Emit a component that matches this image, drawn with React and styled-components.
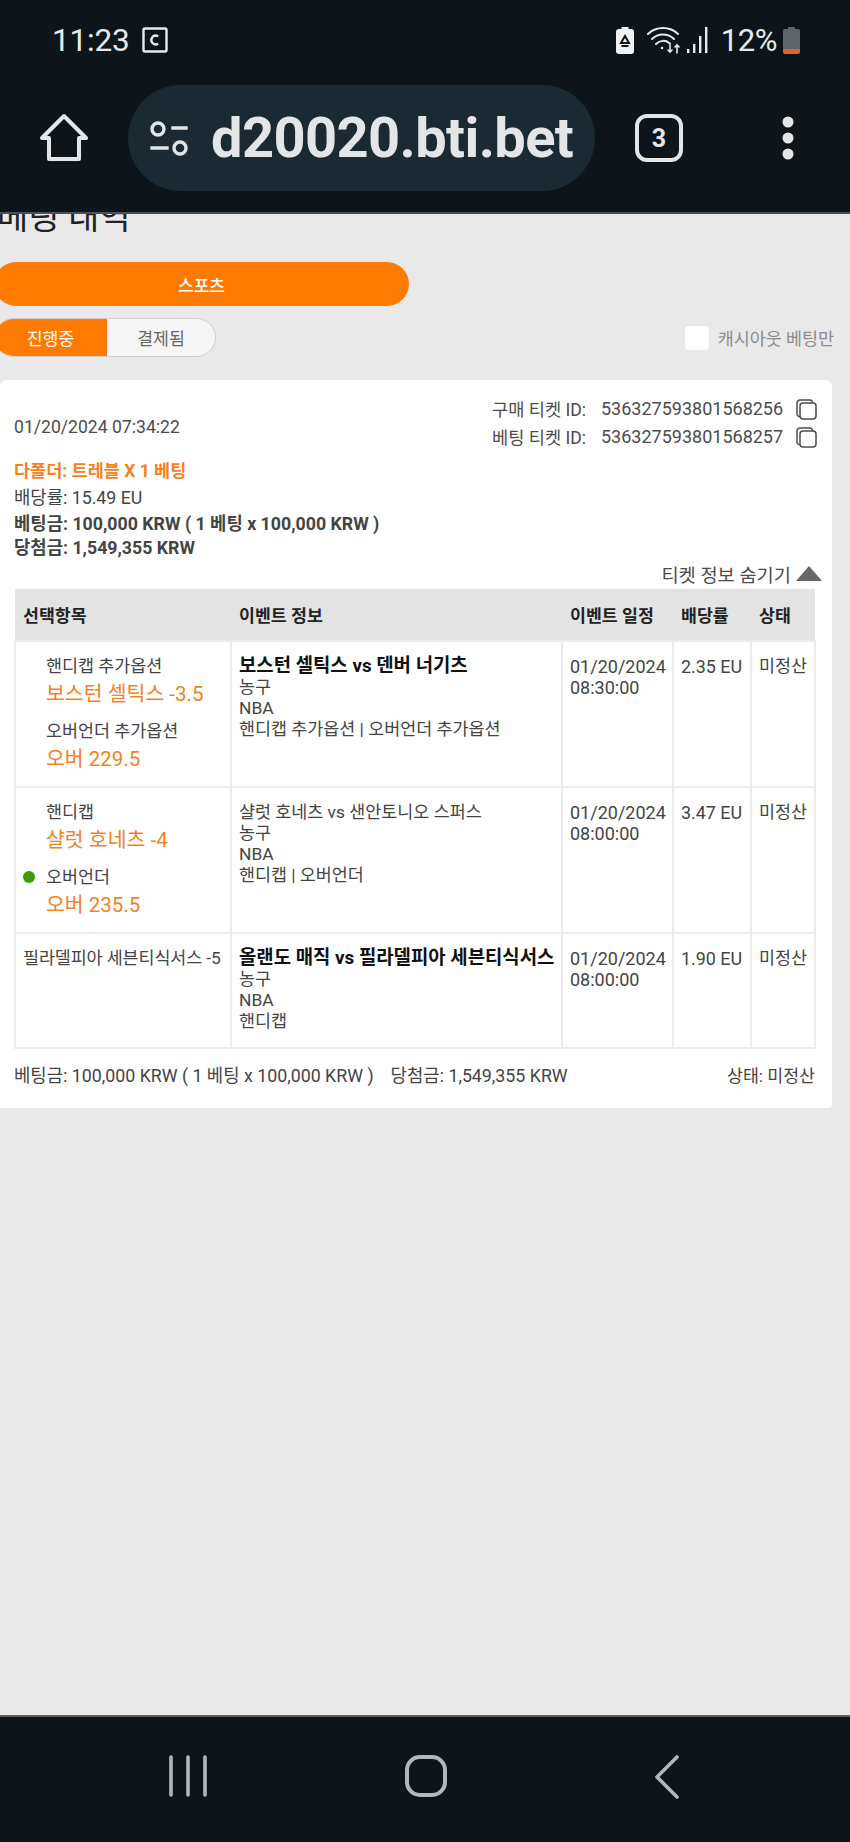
import React from "react";
import styled, { createGlobalStyle } from "styled-components";

const Global = createGlobalStyle`
  html, body { margin: 0; padding: 0; background: #e9e9e9; }
  * { box-sizing: border-box; }
`;
const FONT = `Roboto, "Noto Sans CJK KR", sans-serif`;

const Phone = styled.div`
  width: 850px; height: 1842px; display: flex; flex-direction: column; overflow: hidden;
  font-family: ${FONT}; background: #e9e9e9; color: #444;
`;
const TopChrome = styled.header`
  height: 214px; flex: none; background: #0d151b; border-bottom: 2px solid #4a5055;
  display: flex; flex-direction: column;
`;
const StatusBar = styled.div`
  height: 85px; padding: 24px 50px 0 52px; display: flex; align-items: flex-start; justify-content: space-between; color: #e8eaeb;
`;
const StatusGroup = styled.div`
  display: flex; align-items: center; height: 32px;
`;
const Clock = styled.span`
  font-size: 31.5px; font-weight: 400; width: 82px; letter-spacing: -0.2px;
`;
const Percent = styled.span`
  font-size: 31px; margin: 0 6px 0 12px; letter-spacing: -0.4px;
`;
const UrlRow = styled.div`
  display: flex; align-items: center; height: 106px;
`;
const HomeSlot = styled.div`
  width: 128px; padding-left: 40px; display: flex;
`;
const UrlPill = styled.div`
  width: 467px; height: 106px; border-radius: 53px; background: #1b2933; display: flex; align-items: center; padding-left: 21px; gap: 22px;
`;
const UrlText = styled.span`
  font-size: 56px; font-weight: 700; color: #e3e5e7; letter-spacing: -0.6px; line-height: 1;
`;
const TabSlot = styled.div`
  margin-left: 40px; width: 48px; height: 48px; border: 4px solid #e3e5e7; border-radius: 12px; color: #e3e5e7;
  display: flex; align-items: center; justify-content: center; font-size: 25px; font-weight: 700;
`;
const MenuSlot = styled.div`
  margin-left: 99px; display: flex;
`;
const Main = styled.main`
  flex: 1; min-height: 0; overflow: hidden; display: flex; flex-direction: column;
`;
const Heading = styled.h1`
  margin: -16px 0 0 -3px; font-size: 34px; line-height: 38px; font-weight: 400; color: #222; height: 38px;
`;
const SportButton = styled.div`
  margin: 26px 0 0 -6px; width: 415px; height: 44px; border-radius: 22px; background: #ff7a00; color: #fff;
  display: flex; align-items: center; justify-content: center; font-size: 17px; font-weight: 500;
`;
const FilterRow = styled.div`
  margin-top: 12px; display: flex; align-items: center; justify-content: space-between; padding-right: 16px;
`;
const Tabs = styled.div`
  margin-left: -6px; width: 222px; height: 39px; display: flex; border-radius: 20px; overflow: hidden; border: 1px solid #cfcfcf; background: #f6f6f6;
`;
const Tab = styled.div`
  width: ${p => (p.$on ? 113 : 108)}px; margin: ${p => (p.$on ? "-1px 0 -1px -1px" : "0")}; display: flex; align-items: center; justify-content: center; font-size: 17.3px;
  background: ${p => (p.$on ? "#ff7a00" : "transparent")}; color: ${p => (p.$on ? "#fff" : "#666")};
`;
const CashOut = styled.label`
  display: flex; align-items: center; gap: 9px; font-size: 17.4px; color: #8d8d8d;
`;
const CheckBox = styled.span`
  width: 24px; height: 24px; background: #fff; border-radius: 4px;
`;
const Card = styled.section`
  margin-top: 23px; width: 832px; height: 728px; background: #fff; border-radius: 6px 6px 4px 0; padding: 14px 17px 0 14px; display: flex; flex-direction: column;
`;
const CardTop = styled.div`
  display: flex; justify-content: space-between; height: 62px;
`;
const DateStamp = styled.div`
  font-size: 17.6px; line-height: 20px; margin-top: 23px; color: #4c4c4c;
`;
const Ids = styled.div`
  display: grid; grid-template-columns: 109px auto 34px; grid-auto-rows: 28px; font-size: 17.6px; color: #4c4c4c; align-items: center; width: 323px;
`;
const IdNumber = styled.span`
  font-size: 18px;
`;
const CopyIcon = styled.span`
  display: flex; justify-content: flex-end; padding-top: 3px;
`;
const Summary = styled.div`
  margin-top: 3px; display: flex; flex-direction: column; font-size: 17.75px; line-height: 25px;
`;
const SumLine = styled.div`
  color: ${p => p.$c || "#444"}; font-weight: ${p => (p.$b ? 700 : 400)}; height: ${p => p.$h || 25}px;
  font-size: ${p => (p.$c ? "17.5px" : "inherit")};
`;
const HideRow = styled.div`
  height: 29px; padding-bottom: 3px; display: flex; align-items: center; justify-content: flex-end; gap: 5px; font-size: 18.7px; color: #4c4c4c; margin-right: -7px;
`;
const Table = styled.table`
  width: 800px; border-collapse: collapse; table-layout: fixed; font-size: 17.4px;
`;
const Th = styled.th`
  background: #e3e3e3; height: 52px; text-align: left; padding: 0 8px; font-size: 17.3px; font-weight: 700; color: #222;
  width: ${p => p.$w}px;
`;
const Td = styled.td`
  border: 2px solid #ececec; vertical-align: top; padding: 14px 7px 0; line-height: 21px; color: #444;
`;
const PickTd = styled(Td)`
  padding: 0 0 0 7px; color: #444;
`;
const Pick = styled.div`
  position: relative; padding-left: 23px; display: flex; flex-direction: column;
`;
const PickStack = styled.div`
  padding-top: 12px; display: flex; flex-direction: column; height: 144px;
`;
const PickLabel = styled.div`
  font-size: 17.4px; line-height: 24px; height: 24px; margin-top: ${p => (p.$gap ? 11 : 0)}px;
`;
const PickValue = styled.div`
  font-size: 20.5px; line-height: 28px; margin-top: 2px; color: #f5821f; height: 28px;
`;
const Dot = styled.i`
  position: absolute; left: 0; top: 71px; width: 12px; height: 12px; border-radius: 50%; background: #3a9e0c;
`;
const FlatPick = styled.div`
  padding-top: 14px; font-size: 17.4px; line-height: 21px; white-space: nowrap; letter-spacing: -0.1px;
`;
const Title = styled.div`
  font-weight: ${p => (p.$b ? 700 : 400)}; color: ${p => (p.$b ? "#111" : "#444")}; font-size: ${p => (p.$b ? 18.85 : 17.4)}px; white-space: nowrap;
`;
const Nowrap = styled.div`
  white-space: nowrap; font-size: ${p => p.$s || 17.4}px;
`;
const Footer = styled.div`
  margin-top: 16px; width: 801px; display: flex; align-items: baseline; font-size: 17.8px; line-height: 22px; color: #444;
`;
const FootWin = styled.span`
  margin-left: 17px; flex: 1;
`;
const FootState = styled.span`
  font-size: 17.3px;
`;
const BottomNav = styled.nav`
  height: 127px; flex: none; background: #0d151b; border-top: 2px solid #5a5f63; display: flex; align-items: flex-start; padding-top: 38px;
`;
const NavSlot = styled.div`
  margin-left: ${p => p.$ml}px; display: flex;
`;
const StatusGap = styled.span`
  width: 13px;
`;

const Home = () => (
  <svg width="48" height="50" viewBox="0 0 48 50" fill="none" stroke="#e3e5e7" strokeWidth="4" strokeLinejoin="round">
    <path d="M24 3 L46 25 H39 V46 H9 V25 H2 Z" />
  </svg>
);
const Tune = () => (
  <svg width="40" height="40" viewBox="0 0 40 40" fill="none" stroke="#e3e5e7" strokeWidth="3.4" strokeLinecap="square">
    <circle cx="9" cy="11" r="6" />
    <path d="M24 10 H37 M3 30 H18" />
    <circle cx="31" cy="30" r="6" />
  </svg>
);
const Dots = () => (
  <svg width="12" height="44" viewBox="0 0 12 44" fill="#e3e5e7">
    <circle cx="6" cy="6" r="5.5" /><circle cx="6" cy="22" r="5.5" /><circle cx="6" cy="38" r="5.5" />
  </svg>
);
const CBox = () => (
  <svg width="26" height="26" viewBox="0 0 26 26" style={{ marginLeft: 8 }}>
    <rect x="1.5" y="1.5" width="23" height="23" rx="1.5" fill="none" stroke="#e8eaeb" strokeWidth="2.4" />
    <path d="M16 9.5 a4 4.5 0 1 0 0 7" fill="none" stroke="#e8eaeb" strokeWidth="2.4" />
  </svg>
);
const RecycleBattery = () => (
  <svg width="18" height="27" viewBox="0 0 18 27">
    <rect x="5.5" y="0" width="7" height="3" fill="#f2f2f2" />
    <rect x="0" y="2" width="18" height="25" rx="3" fill="#f2f2f2" />
    <path d="M9 9 L13 16 H5 Z M5.5 19 H12.5" fill="none" stroke="#0d151b" strokeWidth="2" />
  </svg>
);
const Wifi = () => (
  <svg width="34" height="28" viewBox="0 0 34 28" fill="none" stroke="#e8eaeb" strokeWidth="2" strokeLinecap="round">
    <path d="M1 8 C9 0 23 0 31 8" />
    <path d="M5 13 C11 7 21 7 27 13" />
    <path d="M9 18 C13 14 19 14 22 17" />
    <circle cx="15" cy="22" r="1.3" fill="#e8eaeb" stroke="none" />
    <path d="M23 17 V26 M21 24 L23 26 L25 24 M30 27 V19 M28 21 L30 19 L32 21" strokeWidth="1.6" />
  </svg>
);
const Signal = () => (
  <svg width="22" height="26" viewBox="0 0 22 26" fill="#e8eaeb" style={{ marginLeft: 6 }}>
    <rect x="0" y="22" width="2.4" height="4" />
    <rect x="6" y="17" width="2.4" height="9" />
    <rect x="12" y="9" width="2.4" height="17" />
    <rect x="18" y="0" width="2.4" height="26" />
  </svg>
);
const Battery = () => (
  <svg width="17" height="27" viewBox="0 0 17 27">
    <rect x="5" y="0" width="7" height="3" fill="#60656a" />
    <rect x="0" y="2" width="17" height="21" rx="2" fill="#60656a" />
    <path d="M0 22 H17 V25 a2 2 0 0 1 -2 2 H2 a2 2 0 0 1 -2 -2 Z" fill="#e2622e" />
  </svg>
);
const Copy = () => (
  <svg width="21" height="21" viewBox="0 0 21 21" fill="none" stroke="#4c4c4c" strokeWidth="1.5">
    <path d="M4 17.5 A2.5 2.5 0 0 1 1 15 V4 A3 3 0 0 1 4 1 H14 A2.5 2.5 0 0 1 16.5 3.5" />
    <rect x="4" y="4" width="16" height="16" rx="3" fill="#fff" />
  </svg>
);
const Triangle = () => (
  <svg width="26" height="15" viewBox="0 0 26 15"><path d="M13 0 L26 15 H0 Z" fill="#666" /></svg>
);
const NavBars = () => (
  <svg width="40" height="42" viewBox="0 0 40 42" stroke="#b4b7ba" strokeWidth="3.6" strokeLinecap="round">
    <path d="M3 2 V40 M20 2 V40 M37 2 V40" />
  </svg>
);
const NavHome = () => (
  <svg width="42" height="42" viewBox="0 0 42 42" fill="none" stroke="#b4b7ba" strokeWidth="4">
    <rect x="2" y="2" width="38" height="38" rx="13" />
  </svg>
);
const NavBack = () => (
  <svg width="24" height="44" viewBox="0 0 24 44" fill="none" stroke="#b4b7ba" strokeWidth="3.6" strokeLinecap="round" strokeLinejoin="round">
    <path d="M22 2 L2 22 L22 42" />
  </svg>
);

export default function App() {
  return (
    <Phone>
      <Global />
      <TopChrome>
        <StatusBar>
          <StatusGroup><Clock>11:23</Clock><CBox /></StatusGroup>
          <StatusGroup>
            <RecycleBattery /><StatusGap /><Wifi /><Signal /><Percent>12%</Percent><Battery />
          </StatusGroup>
        </StatusBar>
        <UrlRow>
          <HomeSlot><Home /></HomeSlot>
          <UrlPill><Tune /><UrlText>d20020.bti.bet</UrlText></UrlPill>
          <TabSlot>3</TabSlot>
          <MenuSlot><Dots /></MenuSlot>
        </UrlRow>
      </TopChrome>
      <Main>
        <Heading>베팅 내역</Heading>
        <SportButton>스포츠</SportButton>
        <FilterRow>
          <Tabs><Tab $on>진행중</Tab><Tab>결제됨</Tab></Tabs>
          <CashOut><CheckBox />캐시아웃 베팅만</CashOut>
        </FilterRow>
        <Card>
          <CardTop>
            <DateStamp>01/20/2024 07:34:22</DateStamp>
            <Ids>
              <span>구매 티켓 ID:</span><IdNumber>536327593801568256</IdNumber><CopyIcon><Copy /></CopyIcon>
              <span>베팅 티켓 ID:</span><IdNumber>536327593801568257</IdNumber><CopyIcon><Copy /></CopyIcon>
            </Ids>
          </CardTop>
          <Summary>
            <SumLine $b $c="#f5821f" $h={27}>다폴더: 트레블 X 1 베팅</SumLine>
            <SumLine $h={26}>배당률: 15.49 EU</SumLine>
            <SumLine $b $h={24}>베팅금: 100,000 KRW ( 1 베팅 x 100,000 KRW )</SumLine>
            <SumLine $b $h={24}>당첨금: 1,549,355 KRW</SumLine>
          </Summary>
          <HideRow>티켓 정보 숨기기<Triangle /></HideRow>
          <Table>
            <thead>
              <tr>
                <Th $w={216}>선택항목</Th>
                <Th $w={331}>이벤트 정보</Th>
                <Th $w={111}>이벤트 일정</Th>
                <Th $w={78}>배당률</Th>
                <Th $w={64}>상태</Th>
              </tr>
            </thead>
            <tbody>
              <tr>
                <PickTd>
                  <PickStack>
                    <Pick>
                      <PickLabel>핸디캡 추가옵션</PickLabel>
                      <PickValue>보스턴 셀틱스 -3.5</PickValue>
                      <PickLabel $gap>오버언더 추가옵션</PickLabel>
                      <PickValue>오버 229.5</PickValue>
                    </Pick>
                  </PickStack>
                </PickTd>
                <Td>
                  <Title $b>보스턴 셀틱스 vs 덴버 너기츠</Title>
                  <div>농구</div><div>NBA</div><Nowrap>핸디캡 추가옵션 | 오버언더 추가옵션</Nowrap>
                </Td>
                <Td><Nowrap $s={18}>01/20/2024</Nowrap><Nowrap $s={18}>08:30:00</Nowrap></Td>
                <Td><Nowrap $s={17.9}>2.35 EU</Nowrap></Td>
                <Td><Nowrap>미정산</Nowrap></Td>
              </tr>
              <tr>
                <PickTd>
                  <PickStack>
                    <Pick>
                      <PickLabel>핸디캡</PickLabel>
                      <PickValue>샬럿 호네츠 -4</PickValue>
                      <Dot />
                      <PickLabel $gap>오버언더</PickLabel>
                      <PickValue>오버 235.5</PickValue>
                    </Pick>
                  </PickStack>
                </PickTd>
                <Td>
                  <Title>샬럿 호네츠 vs 샌안토니오 스퍼스</Title>
                  <div>농구</div><div>NBA</div><Nowrap>핸디캡 | 오버언더</Nowrap>
                </Td>
                <Td><Nowrap $s={18}>01/20/2024</Nowrap><Nowrap $s={18}>08:00:00</Nowrap></Td>
                <Td><Nowrap $s={17.9}>3.47 EU</Nowrap></Td>
                <Td><Nowrap>미정산</Nowrap></Td>
              </tr>
              <tr>
                <PickTd><FlatPick>필라델피아 세븐티식서스 -5</FlatPick></PickTd>
                <Td style={{ height: 115 }}>
                  <Title $b>올랜도 매직 vs 필라델피아 세븐티식서스</Title>
                  <div>농구</div><div>NBA</div><div>핸디캡</div>
                </Td>
                <Td><Nowrap $s={18}>01/20/2024</Nowrap><Nowrap $s={18}>08:00:00</Nowrap></Td>
                <Td><Nowrap $s={17.9}>1.90 EU</Nowrap></Td>
                <Td><Nowrap>미정산</Nowrap></Td>
              </tr>
            </tbody>
          </Table>
          <Footer>
            <span>베팅금: 100,000 KRW ( 1 베팅 x 100,000 KRW )</span>
            <FootWin>당첨금: 1,549,355 KRW</FootWin>
            <FootState>상태: 미정산</FootState>
          </Footer>
        </Card>
      </Main>
      <BottomNav>
        <NavSlot $ml={168}><NavBars /></NavSlot>
        <NavSlot $ml={197}><NavHome /></NavSlot>
        <NavSlot $ml={208}><NavBack /></NavSlot>
      </BottomNav>
    </Phone>
  );
}
